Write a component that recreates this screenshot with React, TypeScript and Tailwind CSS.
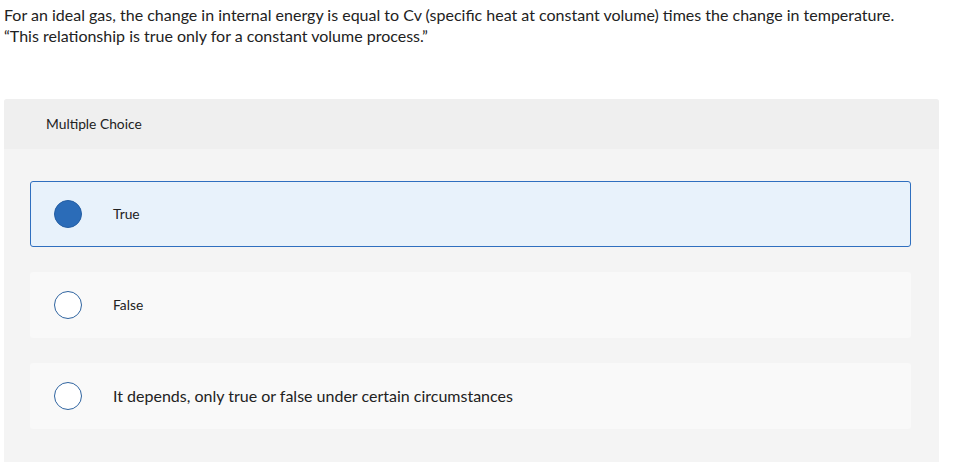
const options = [
  { id: 'a', label: 'True', size: 'text-[13.8px]' },
  { id: 'b', label: 'False', size: 'text-[13.8px]' },
  { id: 'c', label: 'It depends, only true or false under certain circumstances', size: 'text-[16px]' },
];

export default function App() {
  const selected = 'a';

  return (
    <div className="w-[960px] h-[462px] overflow-hidden bg-white text-[#222222] font-['Lato','Liberation_Sans',sans-serif]">
      <div className="px-1 pt-[4px] text-[16px] leading-[21px]">
        <p>For an ideal gas, the change in internal energy is equal to Cv (specific heat at constant volume) times the change in temperature.</p>
        <p>“This relationship is true only for a constant volume process.”</p>
      </div>

      <div className="ml-1 mt-[53px] w-[935px] bg-[#f4f4f4] rounded-t-[3px] h-[400px]">
        <div className="h-[50px] bg-[#efefef] rounded-t-[3px] flex items-center pl-[42px] text-[13.8px]">
          Multiple Choice
        </div>
        <div className="pt-[32px] pl-[26px] pr-[28px] flex flex-col gap-[25px]">
          {options.map((o) => {
            const isSel = o.id === selected;
            return (
              <div
                key={o.id}
                className={
                  isSel
                    ? 'h-[66px] flex items-center rounded-[3px] border border-[#2f6fbf] bg-[#e8f2fb] pl-[23px]'
                    : 'h-[66px] flex items-center rounded-[3px] border border-transparent bg-[#f9f9f9] pl-[23px]'
                }
              >
                {isSel ? (
                  <span className="w-[28px] h-[28px] rounded-full bg-[#2b6cb8] border border-[#245ea3]" />
                ) : (
                  <span className="w-[28px] h-[28px] rounded-full border-[1.5px] border-[#2f64a0] bg-white" />
                )}
                <span className={`ml-[31px] ${o.size}`}>{o.label}</span>
              </div>
            );
          })}
        </div>
      </div>
    </div>
  );
}
